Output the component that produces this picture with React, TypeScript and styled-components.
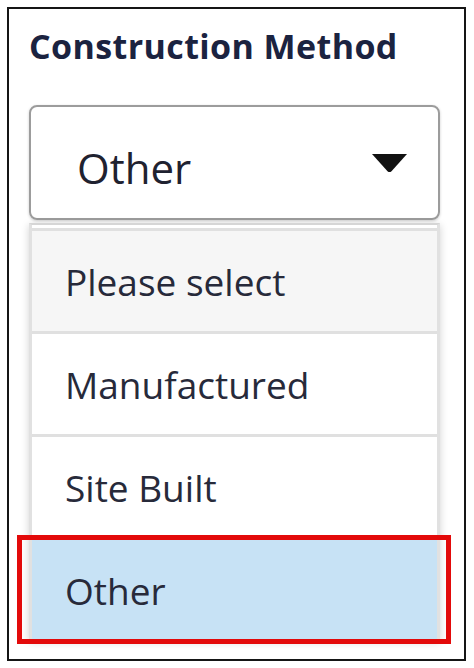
import * as React from "react";
import styled, { createGlobalStyle } from "styled-components";

const GlobalStyle = createGlobalStyle`
  html, body {
    margin: 0;
    padding: 0;
    background: #ffffff;
  }
  * {
    box-sizing: border-box;
  }
`;

// styles
const Frame = styled.main`
  margin: 7px 0 0 7px;
  width: 459px;
  height: 654px;
  border: 2px solid #151515;
  background: #ffffff;
  padding: 15px 24px 0 20px;
  font-family: "Open Sans", "Noto Sans", sans-serif;
`;

const Title = styled.h2`
  margin: 0;
  font-size: 34px;
  line-height: 44px;
  font-weight: 700;
  color: #1b2340;
  letter-spacing: 0.4px;
`;

const SelectBox = styled.div`
  margin-top: 37px;
  width: 411px;
  height: 115px;
  border: 2px solid #9c9c9c;
  border-radius: 8px;
  box-shadow: 0 1px 3px rgba(0, 0, 0, 0.2);
  display: flex;
  align-items: center;
  justify-content: space-between;
  padding: 10px 31px 0 46px;
`;

const SelectValue = styled.span`
  font-size: 42px;
  line-height: 1;
  color: #1f2230;
`;

const Caret = styled.svg`
  display: block;
  margin-top: -8px;
`;

const OptionList = styled.ul`
  list-style: none;
  margin: 3px 0 0;
  padding: 3px 0 0;
  width: 411px;
  border-top: 2px solid #d6d6d6;
  border-left: 3px solid #e1e1e1;
  border-right: 3px solid #e1e1e1;
  box-shadow: 0 2px 8px rgba(0, 0, 0, 0.18);
`;

const Option = styled.li<{ $tone: "muted" | "plain" | "active" }>`
  position: relative;
  height: 103px;
  border-top: 3px solid #e0e0e0;
  display: flex;
  align-items: center;
  padding-left: 33px;
  font-size: 37px;
  color: #272a3a;
  background: ${({ $tone }) =>
    $tone === "muted" ? "#f6f6f6" : $tone === "active" ? "#c7e2f5" : "#ffffff"};
`;

const Highlight = styled.span`
  position: absolute;
  left: -15px;
  top: -5px;
  width: 434px;
  height: 109px;
  border: 5px solid #e30a0a;
  pointer-events: none;
`;

const options = [
  { label: "Please select", tone: "muted" as const },
  { label: "Manufactured", tone: "plain" as const },
  { label: "Site Built", tone: "plain" as const },
  { label: "Other", tone: "active" as const },
];

// markup
const App = () => {
  return (
    <>
      <GlobalStyle />
      <Frame>
        <Title>Construction Method</Title>
        <SelectBox>
          <SelectValue>Other</SelectValue>
          <Caret width="35" height="19" viewBox="0 0 35 19">
            <path d="M0 0 H35 L19.5 17.2 Q17.5 19 15.5 17.2 Z" fill="#111" />
          </Caret>
        </SelectBox>
        <OptionList>
          {options.map((opt) => (
            <Option key={opt.label} $tone={opt.tone}>
              {opt.label}
              {opt.tone === "active" && <Highlight />}
            </Option>
          ))}
        </OptionList>
      </Frame>
    </>
  );
};

export default App;
